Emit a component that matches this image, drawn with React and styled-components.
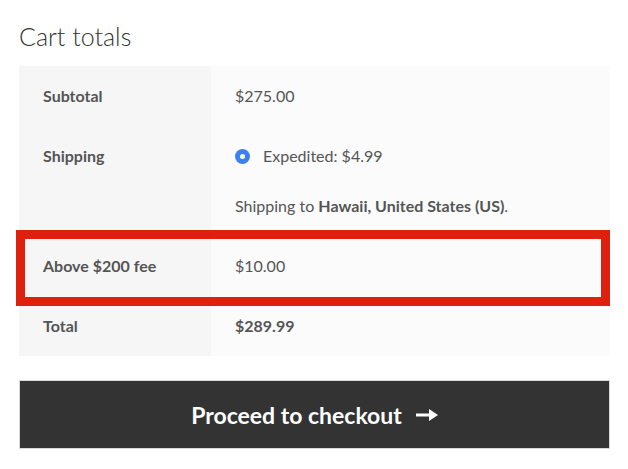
import React from 'react'
import styled, { createGlobalStyle } from 'styled-components'

const GlobalStyle = createGlobalStyle`
  html, body {
    margin: 0;
    padding: 0;
    background: #ffffff;
  }
  body {
    font-family: "Lato", "Liberation Sans", sans-serif;
    color: #555555;
  }
`

const Page = styled.div`
  padding: 22px 18px 0 19px;
  width: 628px;
  box-sizing: border-box;
`

const Title = styled.h2`
  margin: 0 0 16px;
  font-size: 25px;
  line-height: 28px;
  font-weight: 300;
  color: #333333;
`

const Totals = styled.div`
  display: grid;
  grid-template-columns: 192px 1fr;
`

const Row = styled.div`
  display: contents;
`

const Label = styled.div`
  background: #f6f6f6;
  padding: 18px 24px;
  font-size: 16px;
  line-height: 24px;
  font-weight: 700;
  color: #555555;
`

const Value = styled.div`
  background: #fbfbfb;
  padding: 18px 24px;
  font-size: 16px;
  line-height: 24px;
  font-weight: ${({ strong }) => (strong ? 700 : 400)};
  color: #555555;
`

const HighlightRow = styled.div`
  position: relative;
  grid-column: 1 / -1;
  display: grid;
  grid-template-columns: 192px 1fr;
`

const Highlight = styled.div`
  position: absolute;
  z-index: 2;
  top: -6px;
  bottom: -10px;
  left: -3px;
  right: 0;
  border: 9px solid #e0200f;
  pointer-events: none;
`

const Method = styled.label`
  display: flex;
  align-items: center;
  gap: 13px;
  margin-bottom: 26px;
`

const Radio = styled.span`
  width: 15px;
  height: 15px;
  border-radius: 50%;
  background: #3d82ec;
  display: flex;
  align-items: center;
  justify-content: center;
  &::after {
    content: '';
    width: 5px;
    height: 5px;
    border-radius: 50%;
    background: #ffffff;
  }
`

const Destination = styled.p`
  margin: 0;
  strong {
    font-weight: 700;
  }
`

const Checkout = styled.button`
  margin-top: 24px;
  width: 100%;
  height: 69px;
  background: #333333;
  border: 1px solid #d8d8d8;
  color: #ffffff;
  font-family: "Lato", "Liberation Sans", sans-serif;
  font-size: 23px;
  font-weight: 700;
  display: flex;
  align-items: center;
  justify-content: center;
  gap: 14px;
  cursor: pointer;
`

const Arrow = () => (
  <svg width="22" height="14" viewBox="0 0 22 14">
    <rect x="0" y="5.5" width="14" height="3" fill="#fff" />
    <path d="M13 1 L22 7 L13 13 Z" fill="#fff" />
  </svg>
)

const App = () => {
  return (
    <Page>
      <GlobalStyle />
      <Title>Cart totals</Title>
      <Totals>
        <Row>
          <Label>Subtotal</Label>
          <Value>$275.00</Value>
        </Row>
        <Row>
          <Label>Shipping</Label>
          <Value>
            <Method>
              <Radio />
              Expedited: $4.99
            </Method>
            <Destination>
              Shipping to <strong>Hawaii, United States (US)</strong>.
            </Destination>
          </Value>
        </Row>
        <HighlightRow>
          <Label>Above $200 fee</Label>
          <Value>$10.00</Value>
          <Highlight />
        </HighlightRow>
        <Row>
          <Label>Total</Label>
          <Value strong>$289.99</Value>
        </Row>
      </Totals>
      <Checkout>
        Proceed to checkout
        <Arrow />
      </Checkout>
    </Page>
  )
}

export default App
